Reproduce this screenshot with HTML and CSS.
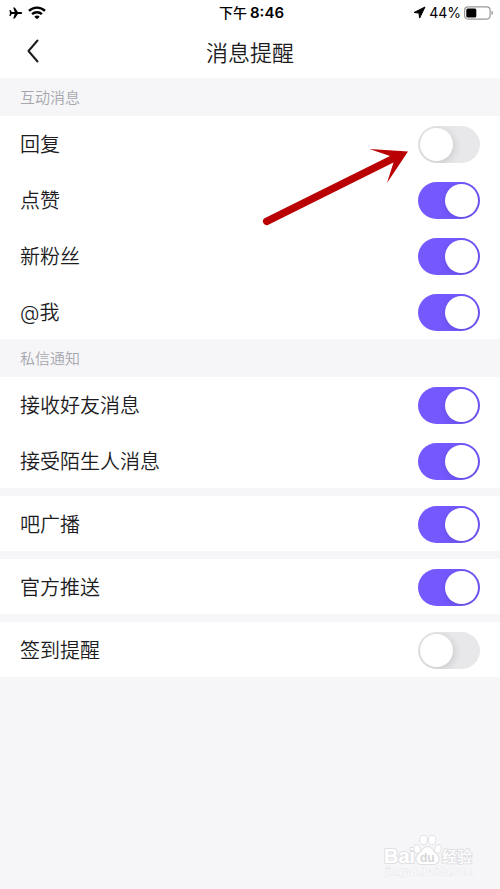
FILE: index.html
```html
<!DOCTYPE html>
<html lang="zh-CN">
<head>
<meta charset="utf-8">
<meta name="viewport" content="width=device-width, initial-scale=1">
<title>消息提醒</title>
<link rel="stylesheet" href="styles.css">
</head>
<body>
<header class="top">
  <div class="status">
    <div class="status-side">
      <svg class="plane" width="14" height="12" viewBox="0 0 14 12" aria-hidden="true"><path d="M13.2 6c0-.7-.8-1.100-1.600-1.100H8.900L5.800.4H4.200l1.500 4.500H2.800L1.500 3.100H.4L1 6 .4 8.900h1.100l1.300-1.800h2.900l-1.500 4.500h1.600l3.100-4.500h2.700c.8 0 1.600-.4 1.600-1.100z"/></svg>
      <svg class="wifi" width="18" height="14" viewBox="0 0 18 14" aria-hidden="true"><path class="arc" d="M1 4.900A11.500 11.500 0 0 1 17 4.900M4.100 8.200a7 7 0 0 1 9.800 0"/><path d="M9 13.300 6.300 10.700a3.900 3.900 0 0 1 5.400 0z"/></svg>
    </div>
    <div class="clock"><span class="ampm">下午</span><span>8:46</span></div>
    <div class="status-side status-end">
      <svg width="13" height="13" viewBox="0 0 13 13" aria-hidden="true"><path class="locate" d="M12 1 1 6.500l5 .6.600 5z"/></svg>
      <span class="percent">44%</span>
      <svg width="30" height="14" viewBox="0 0 30 14" aria-hidden="true"><rect class="case" x=".6" y=".9" width="25.500" height="12.200" rx="3.500"/><rect x="2.300" y="2.600" width="10" height="8.800" rx="1.500"/><path class="tip" d="M27.500 4.800c2 .6 2 3.800 0 4.400z"/></svg>
    </div>
  </div>
  <div class="nav">
    <button class="back" type="button" aria-label="返回"><svg width="14" height="26" viewBox="0 0 14 26" aria-hidden="true"><path d="M11.500 2.500 2.500 13l9 10.500"/></svg></button>
    <h1>消息提醒</h1>
  </div>
</header>
<main>
  <h2>互动消息</h2>
  <div class="list">
    <label class="row">回复<input type="checkbox" role="switch"></label>
    <label class="row">点赞<input type="checkbox" role="switch" checked></label>
    <label class="row">新粉丝<input type="checkbox" role="switch" checked></label>
    <label class="row">@我<input type="checkbox" role="switch" checked></label>
    <svg class="pointer" width="150" height="82" viewBox="0 0 150 82" aria-hidden="true"><path d="M148 7.500 109.500 5 130 12 4.500 74.200a3.800 3.800 0 0 0 3.400 6.700L133.500 18.500 127 39z"/></svg>
  </div>
  <h2>私信通知</h2>
  <div class="list">
    <label class="row">接收好友消息<input type="checkbox" role="switch" checked></label>
    <label class="row">接受陌生人消息<input type="checkbox" role="switch" checked></label>
  </div>
  <div class="list spaced"><label class="row">吧广播<input type="checkbox" role="switch" checked></label></div>
  <div class="list spaced"><label class="row">官方推送<input type="checkbox" role="switch" checked></label></div>
  <div class="list spaced"><label class="row">签到提醒<input type="checkbox" role="switch"></label></div>
</main>
<footer class="mark">
  <svg width="94" height="48" viewBox="0 0 94 48" role="img" aria-label="Baidu 经验">
    <g class="ink">
      <text class="latin" x="1" y="30">Bai</text>
      <ellipse cx="34" cy="16" rx="2.800" ry="3.800" transform="rotate(-12 34 16)"/>
      <ellipse cx="40.500" cy="7" rx="3.300" ry="4.200"/>
      <ellipse cx="49" cy="7" rx="3.300" ry="4.200"/>
      <ellipse cx="55" cy="16" rx="2.800" ry="3.800" transform="rotate(12 55 16)"/>
      <path d="M44.500 14c-4 0-5 4-8 6.500-5.500 4.500-3 10.500 2 10.500h12c5 0 7.500-6 2-10.500-3-2.500-4-6.500-8-6.500z"/>
      <text class="cjk" x="59" y="29">经验</text>
    </g>
    <text class="du" x="37" y="29">du</text>
    <text class="url" x="2" y="42">jingyan.baidu.com</text>
  </svg>
</footer>
</body>
</html>
```
FILE: styles.css
```css
* { box-sizing: border-box; }

body {
  margin: 0;
  min-height: 100vh;
  display: flex;
  flex-direction: column;
  background: #f6f6f9;
  color: #1c1c1e;
  font-family: "Noto Sans CJK SC", "Noto Sans", sans-serif;
  font-weight: 350;
}

.top { background: #fff; }

.status {
  display: grid;
  grid-template-columns: 1fr auto 1fr;
  align-items: center;
  height: 25px;
  padding: 0 6px 0 9px;
  color: #000;
}
.status-side { display: flex; align-items: center; gap: 5px; }
.status-end { justify-content: flex-end; gap: 3px; }
.arc { fill: none; stroke: #000; stroke-width: 2.400; }
.locate { stroke: #000; stroke-linejoin: round; }
.case { fill: none; stroke: #999; stroke-width: 1.200; }
.tip { fill: #999; }
.percent { font: 14px/24px Inter, sans-serif; }
.clock {
  display: flex;
  align-items: center;
  gap: 3px;
  font: 600 15px/24px Inter, "Noto Sans CJK SC", sans-serif;
}
.ampm { font-size: 14px; font-weight: 500; }

.nav {
  display: grid;
  grid-template-columns: 1fr auto 1fr;
  align-items: center;
  height: 53px;
  padding-bottom: 2px;
}
.back {
  justify-self: start;
  display: flex;
  margin: 0;
  padding: 0 26px;
  border: 0;
  background: none;
}
.back path {
  fill: none;
  stroke: #1c1c1e;
  stroke-width: 2;
  stroke-linecap: round;
  stroke-linejoin: round;
}
h1 { margin: 0; font-size: 22px; font-weight: 350; line-height: 30px; }

h2 {
  margin: 0;
  padding: 0 20px;
  color: #a7a7ad;
  font-size: 15px;
  font-weight: 350;
  line-height: 38px;
}

.list {
  position: relative;
  display: grid;
  gap: 1px;
  background: #fff;
}
.spaced { margin-top: 8px; }
.row {
  display: flex;
  align-items: center;
  justify-content: space-between;
  padding: 10px 20px 8px;
  font-family: Inter, "Noto Sans CJK SC", sans-serif;
  font-size: 20px;
  line-height: 36px;
}

.row input {
  appearance: none;
  flex: none;
  display: flex;
  width: 62px;
  height: 37px;
  margin: 0;
  padding: 2px;
  border-radius: 19px;
  background: #e8e8ea;
  overflow: hidden;
}
.row input::before {
  content: "";
  width: 33px;
  height: 33px;
  border-radius: 50%;
  background: #fff;
  box-shadow: 1px 2px 8px rgba(0, 0, 0, 0.15);
}
.row input:checked { justify-content: flex-end; background: #7559ff; }

.pointer {
  position: absolute;
  top: 28px;
  right: 90px;
  fill: #b90003;
  pointer-events: none;
}

.mark {
  display: flex;
  justify-content: flex-end;
  margin-top: auto;
  padding: 0 23px 8px;
}
.ink { fill: #fff; stroke: #e0e0e3; stroke-width: 2; paint-order: stroke; }
.latin { font: 700 20px "Liberation Sans", sans-serif; }
.cjk { font: 500 15px "Noto Sans CJK SC", sans-serif; }
.du { fill: #d5d5d8; font: 700 12px "Liberation Sans", sans-serif; }
.url {
  fill: #fff;
  stroke: #e6e6e9;
  stroke-width: 1;
  paint-order: stroke;
  font: 11px "Liberation Sans", sans-serif;
}
```
